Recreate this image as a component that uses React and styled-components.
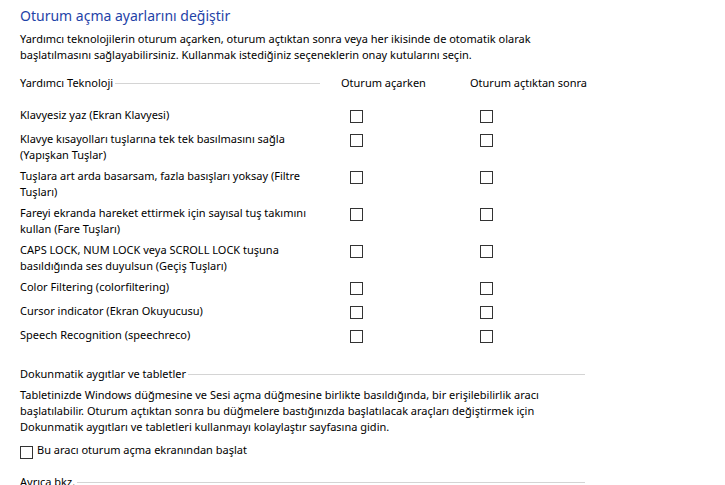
import styled, { createGlobalStyle } from 'styled-components';

const GlobalStyle = createGlobalStyle`
  body {
    margin: 0;
    background: #fff;
    font-family: "Noto Sans", "Open Sans", sans-serif;
    font-size: 11px;
    color: #000;
  }
`;

const Page = styled.div`
  width: 565px;
  padding: 6px 0 0 20px;
`;

const Title = styled.h1`
  margin: 0 0 5px;
  font-size: 14px;
  font-weight: 400;
  line-height: 20px;
  color: #1f43a8;
`;

const Text = styled.p`
  margin: ${p => p.top || 0}px 0 0;
  line-height: 16px;
  white-space: nowrap;
`;

// ayirici cizgili grup basligi
const GroupHead = styled.div`
  display: flex;
  align-items: center;
  line-height: 16px;
  margin-right: ${p => p.right || 0}px;
  white-space: nowrap;

  &::after {
    content: '';
    flex: 1;
    height: 1px;
    margin-left: 2px;
    background: #d4d4d4;
  }
`;

const Grid = styled.div`
  display: grid;
  grid-template-columns: 321px 129px 1fr;
  margin-top: 12px;
`;

const ColHead = styled.div`
  line-height: 16px;
  white-space: nowrap;
`;

const Rows = styled.div`
  grid-column: 1 / -1;
  display: flex;
  flex-direction: column;
  gap: 5px;
  margin-top: 16px;
`;

const Row = styled.div`
  display: grid;
  grid-template-columns: 321px 129px 1fr;
  min-height: 19px;
  align-items: start;
`;

const Label = styled.div`
  line-height: 16px;
  white-space: nowrap;
`;

const Check = styled.input.attrs({ type: 'checkbox' })`
  appearance: none;
  display: block;
  flex: none;
  box-sizing: border-box;
  width: 13px;
  height: 13px;
  margin: ${p => p.$top ?? 3}px 0 0 ${p => p.$left || 0}px;
  border: 1px solid #333;
  background: #fff;
  border-radius: 0;
`;

const Section = styled.div`
  margin-top: ${p => p.top}px;
`;

const Option = styled.label`
  display: flex;
  align-items: flex-start;
  gap: 4px;
  margin-top: 7px;
  line-height: 16px;
`;

const rows = [
  ['Klavyesiz yaz (Ekran Klavyesi)'],
  ['Klavye kısayolları tuşlarına tek tek basılmasını sağla', '(Yapışkan Tuşlar)'],
  ['Tuşlara art arda basarsam, fazla basışları yoksay (Filtre', 'Tuşları)'],
  ['Fareyi ekranda hareket ettirmek için sayısal tuş takımını', 'kullan (Fare Tuşları)'],
  ['CAPS LOCK, NUM LOCK veya SCROLL LOCK tuşuna', 'basıldığında ses duyulsun (Geçiş Tuşları)'],
  ['Color Filtering (colorfiltering)'],
  ['Cursor indicator (Ekran Okuyucusu)'],
  ['Speech Recognition (speechreco)'],
];

export default function App() {
  return (
    <Page>
      <GlobalStyle />
      <Title>Oturum açma ayarlarını değiştir</Title>
      <Text>
        Yardımcı teknolojilerin oturum açarken, oturum açtıktan sonra veya her ikisinde de otomatik olarak<br />
        başlatılmasını sağlayabilirsiniz. Kullanmak istediğiniz seçeneklerin onay kutularını seçin.
      </Text>

      <Grid>
        <GroupHead right={21}>Yardımcı Teknoloji</GroupHead>
        <ColHead>Oturum açarken</ColHead>
        <ColHead>Oturum açtıktan sonra</ColHead>
        <Rows>
          {rows.map((lines, i) => (
            <Row key={i}>
              <Label>
                {lines.map((l, j) => <div key={j}>{l}</div>)}
              </Label>
              <Check $left={9} />
              <Check $left={10} />
            </Row>
          ))}
        </Rows>
      </Grid>

      <Section top={20}>
        <GroupHead>Dokunmatik aygıtlar ve tabletler</GroupHead>
        <Text top={5}>
          Tabletinizde Windows düğmesine ve Sesi açma düğmesine birlikte basıldığında, bir erişilebilirlik aracı<br />
          başlatılabilir. Oturum açtıktan sonra bu düğmelere bastığınızda başlatılacak araçları değiştirmek için<br />
          Dokunmatik aygıtları ve tabletleri kullanmayı kolaylaştır sayfasına gidin.
        </Text>
        <Option>
          <Check $top={4} />
          Bu aracı oturum açma ekranından başlat
        </Option>
      </Section>

      <Section top={15}>
        <GroupHead>Ayrıca bkz.</GroupHead>
      </Section>
    </Page>
  );
}
